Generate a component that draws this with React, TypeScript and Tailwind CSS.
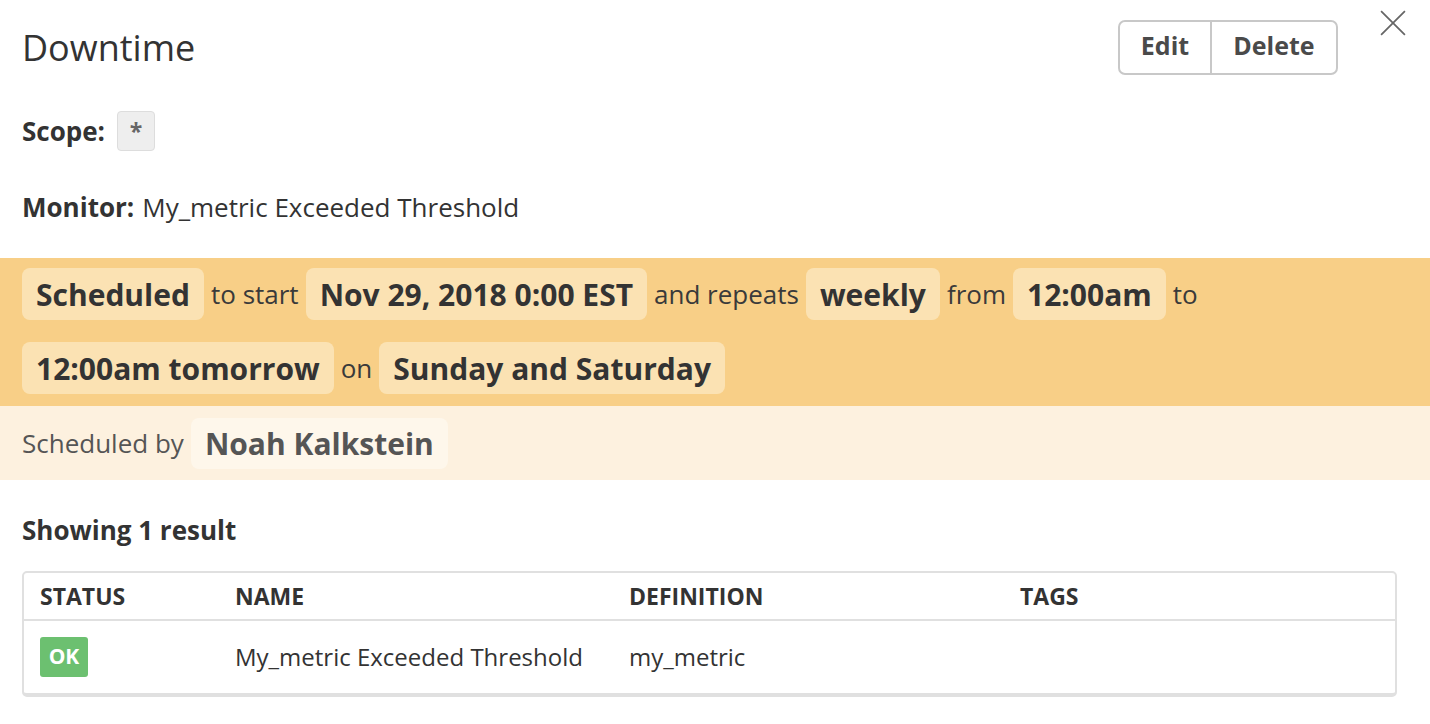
import React from "react";

const Chip = ({ children }: { children: React.ReactNode }) => (
  <span className="inline-flex items-center h-[52px] px-[14px] rounded-[8px] bg-[#fbe2b3] font-bold text-[30px] text-[#333]">
    {children}
  </span>
);

const Word = ({ children }: { children: React.ReactNode }) => (
  <span className="text-[26px] text-[#3a3a3a] mx-[7px]">{children}</span>
);

const App = () => {
  return (
    <div
      className="w-[1430px] h-[724px] bg-white text-[#333] overflow-hidden relative"
      style={{ fontFamily: '"Open Sans", sans-serif' }}
    >
      {/* close */}
      <button className="absolute right-[24px] top-[10px] w-[26px] h-[26px] text-[#666]">
        <svg viewBox="0 0 24 24" width="26" height="26" fill="none" stroke="currentColor" strokeWidth="1.6">
          <path d="M1 1 L23 23 M23 1 L1 23" />
        </svg>
      </button>

      {/* header */}
      <div className="flex items-center justify-between pl-[22px] pr-[92px] pt-[20px]">
        <h1 className="text-[36px] leading-[55px] text-[#333]">Downtime</h1>
        <div className="flex h-[55px] border-2 border-[#c8c8c8] rounded-[7px] overflow-hidden">
          <button className="w-[92px] pb-[3px] font-bold text-[25px] text-[#4a4a4a] border-r-2 border-[#c8c8c8]">Edit</button>
          <button className="w-[124px] pb-[3px] font-bold text-[25px] text-[#4a4a4a]">Delete</button>
        </div>
      </div>

      {/* scope */}
      <div className="flex items-center pl-[22px] mt-[36px] h-[40px]">
        <span className="font-bold text-[26px]">Scope:</span>
        <span className="ml-[12px] w-[38px] h-[40px] flex items-center justify-center bg-[#eee] border border-[#ddd] rounded-[4px] text-[23px] font-bold text-[#666]">
          *
        </span>
      </div>

      {/* monitor */}
      <div className="pl-[22px] mt-[36px] h-[40px] flex items-center text-[26px]">
        <span className="font-bold mr-[8px]">Monitor:</span>
        <span>My_metric Exceeded Threshold</span>
      </div>

      {/* schedule band */}
      <div className="mt-[31px] bg-[#f8cf87] px-[22px] pt-[10px] pb-[12px] flex flex-col gap-[22px]">
        <div className="flex items-center">
          <Chip>Scheduled</Chip>
          <Word>to start</Word>
          <Chip>Nov 29, 2018 0:00 EST</Chip>
          <Word>and repeats</Word>
          <Chip>weekly</Chip>
          <Word>from</Word>
          <Chip>12:00am</Chip>
          <Word>to</Word>
        </div>
        <div className="flex items-center">
          <Chip>12:00am tomorrow</Chip>
          <Word>on</Word>
          <Chip>Sunday and Saturday</Chip>
        </div>
      </div>

      <div className="bg-[#fdf1df] px-[22px] h-[74px] flex items-center">
        <span className="text-[26px] text-[#555]">Scheduled by</span>
        <span className="ml-[7px] h-[51px] px-[14px] flex items-center rounded-[8px] bg-[#fef7eb] font-bold text-[30px] text-[#555]">
          Noah Kalkstein
        </span>
      </div>

      {/* results */}
      <div className="px-[22px] pt-[34px]">
        <div className="font-bold text-[26px] leading-[32px]">Showing 1 result</div>
        <div className="mt-[25px] w-[1375px] border-2 border-[#e0e0e0] border-b-[4px] rounded-[5px]">
          <div className="grid grid-cols-[195px_394px_391px_1fr] h-[48px] items-center border-b-2 border-[#e0e0e0] px-[16px] font-bold text-[23px] text-[#333]">
            <span>STATUS</span>
            <span>NAME</span>
            <span>DEFINITION</span>
            <span>TAGS</span>
          </div>
          <div className="grid grid-cols-[195px_394px_391px_1fr] h-[72px] items-center px-[16px] text-[24px] text-[#333]">
            <span>
              <span className="inline-flex items-center justify-center w-[48px] h-[40px] rounded-[3px] bg-[#6cc070] text-white font-bold text-[21px]">
                OK
              </span>
            </span>
            <span>My_metric Exceeded Threshold</span>
            <span>my_metric</span>
            <span></span>
          </div>
        </div>
      </div>
    </div>
  );
};

export default App;
